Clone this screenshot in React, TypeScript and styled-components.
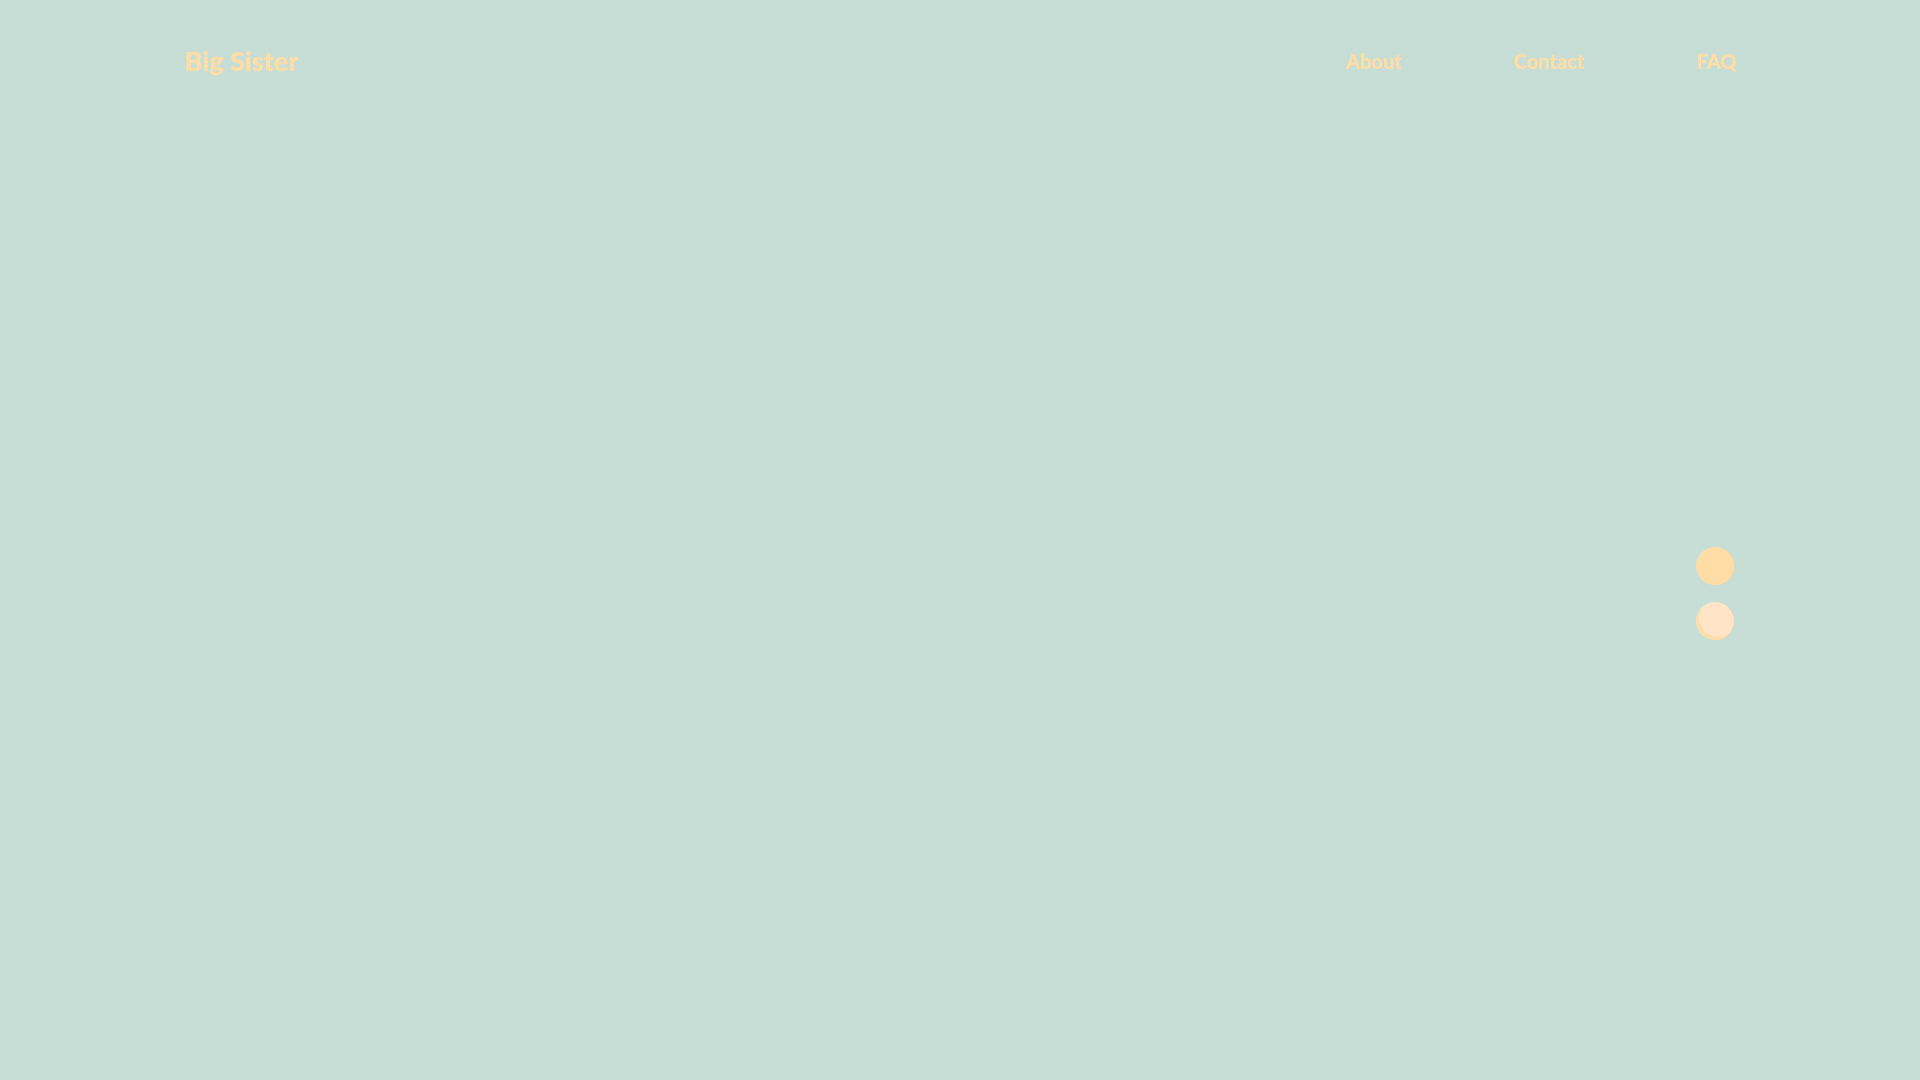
import React, { useState } from "react";
import styled, { createGlobalStyle } from "styled-components";

const GlobalStyle = createGlobalStyle`
  *, *::before, *::after { box-sizing: border-box; }
  body {
    margin: 0;
    background: #c6ded5;
    color: #ffdda5;
    font-family: Lato, "Open Sans", sans-serif;
  }
`;

const Page = styled.div`
  min-height: 100vh;
  display: flex;
  flex-direction: column;
  padding: 0 184px;
`;

const Header = styled.header`
  display: flex;
  align-items: center;
  justify-content: space-between;
  padding: 45px 0 30px;
`;

const TextLink = styled.a`
  color: inherit;
  text-decoration: none;
  line-height: 32px;
  font-weight: 900;
`;

const Brand = styled(TextLink)`
  font-size: 27px;
`;

const Nav = styled.nav`
  display: flex;
  gap: 112px;
`;

const NavLink = styled(TextLink)`
  font-size: 20px;
`;

const Main = styled.main`
  flex: 1;
  display: flex;
  align-items: center;
  justify-content: flex-end;
  padding-right: 2px;
`;

const Dots = styled.div`
  display: flex;
  flex-direction: column;
  gap: 17px;
`;

const Dot = styled.button<{ $active: boolean }>`
  width: 38px;
  height: 38px;
  padding: 0;
  border: 0;
  border-radius: 50%;
  cursor: pointer;
  background: ${(p) => (p.$active ? "#ffdda5" : "#ffe4c8")};
  box-shadow: inset 3px -3px 0 #ffdda5;
`;

const links = ["About", "Contact", "FAQ"];
const slides = ["First slide", "Second slide"];

export default function App() {
  const [current, setCurrent] = useState(0);
  return (
    <>
      <GlobalStyle />
      <Page>
        <Header>
          <Brand href="#home">Big Sister</Brand>
          <Nav>
            {links.map((label) => (
              <NavLink key={label} href={`#${label.toLowerCase()}`}>
                {label}
              </NavLink>
            ))}
          </Nav>
        </Header>
        <Main>
          <Dots>
            {slides.map((label, i) => (
              <Dot
                key={label}
                type="button"
                aria-label={label}
                aria-pressed={i === current}
                $active={i === current}
                onClick={() => setCurrent(i)}
              />
            ))}
          </Dots>
        </Main>
      </Page>
    </>
  );
}
